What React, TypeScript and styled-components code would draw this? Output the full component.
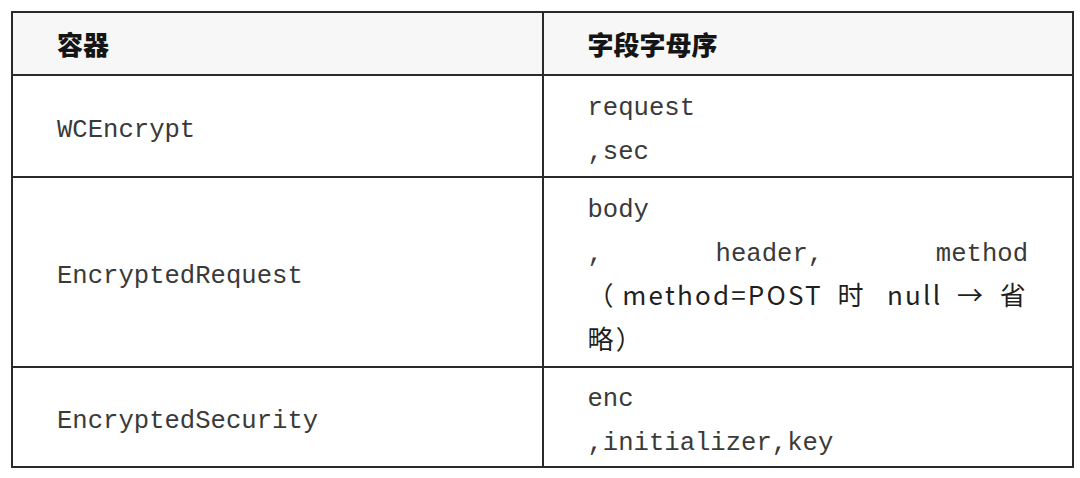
import React from "react";
import styled, { createGlobalStyle } from "styled-components";

const Global = createGlobalStyle`
  html, body { margin: 0; padding: 0; background: #ffffff; }
  body { font-family: "Noto Sans CJK SC", "Noto Sans", sans-serif; }
`;

const Page = styled.div`
  padding: 11px 0 0 11px;
`;

const Table = styled.table`
  width: 1063px;
  border-collapse: collapse;
  table-layout: fixed;
  border: 2px solid #2a2a2a;
`;

const HeadCell = styled.th`
  width: 50%;
  background: #f7f7f7;
  border: 2px solid #2a2a2a;
  padding: 9px 44px 8px;
  text-align: left;
  font-family: "Noto Sans CJK SC", sans-serif;
  font-weight: 900;
  font-size: 26px;
  line-height: 44px;
  color: #151515;
`;

const Cell = styled.td<{ $pad: number }>`
  border: 2px solid #2a2a2a;
  padding: ${(p) => p.$pad}px 44px;
  vertical-align: middle;
  color: #333333;
`;

const Line = styled.div<{ $justify?: boolean; $cjk?: boolean }>`
  font-family: ${(p) =>
    p.$cjk ? `"Noto Sans CJK SC", sans-serif` : `"Liberation Mono", monospace`};
  font-size: ${(p) => (p.$cjk ? "26px" : "25.6px")};
  letter-spacing: ${(p) => (p.$cjk ? "2.2px" : "0")};
  padding-top: ${(p) => (p.$cjk ? "0" : "10px")};
  line-height: ${(p) => (p.$cjk ? "44px" : "34px")};
  white-space: ${(p) => (p.$justify ? "normal" : "pre")};
  color: ${(p) => (p.$cjk ? "#1f1f1f" : "#3a3a3a")};
  text-align: ${(p) => (p.$justify ? "justify" : "left")};
  text-align-last: ${(p) => (p.$justify ? "justify" : "auto")};
  text-justify: inter-word;
`;

const rows: { name: string; pad: number; lines: { t: string; j?: boolean; c?: boolean }[] }[] = [
  { name: "WCEncrypt", pad: 6, lines: [{ t: "request" }, { t: ",sec" }] },
  {
    name: "EncryptedRequest",
    pad: 6,
    lines: [
      { t: "body" },
      { t: ", header, method", j: true },
      { t: "（method=POST 时 null → 省", j: true, c: true },
      { t: "略）", c: true },
    ],
  },
  { name: "EncryptedSecurity", pad: 5, lines: [{ t: "enc" }, { t: ",initializer,key" }] },
];

export default function App() {
  return (
    <Page>
      <Global />
      <Table>
        <thead>
          <tr>
            <HeadCell>容器</HeadCell>
            <HeadCell>字段字母序</HeadCell>
          </tr>
        </thead>
        <tbody>
          {rows.map((r) => (
            <tr key={r.name}>
              <Cell $pad={r.pad}>
                <Line>{r.name}</Line>
              </Cell>
              <Cell $pad={r.pad}>
                {r.lines.map((l, i) => (
                  <Line key={i} $justify={l.j} $cjk={l.c}>
                    {l.t}
                  </Line>
                ))}
              </Cell>
            </tr>
          ))}
        </tbody>
      </Table>
    </Page>
  );
}
